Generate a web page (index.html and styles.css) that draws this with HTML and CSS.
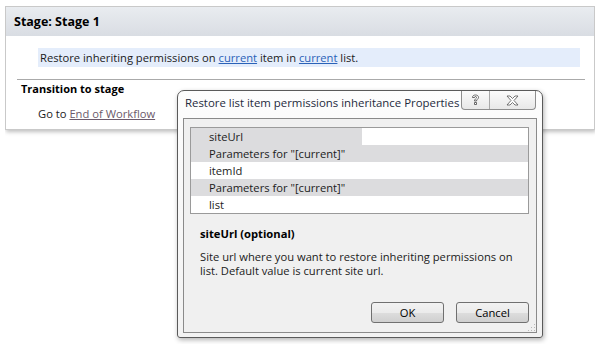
FILE: index.html
```html
<!DOCTYPE html>
<html lang="en">
<head>
    <meta charset="UTF-8">
    <title>Stage 1</title>
    <link rel="stylesheet" href="styles.css">
</head>
<body>
    <div class="stage">
        <div class="stage-head">Stage: Stage 1</div>
        <div class="stage-body">
            <div class="action">Restore inheriting permissions on <a href="#">current</a> item in <a href="#">current</a> list.</div>
        </div>
        <div class="transition">
            <div class="transition-title">Transition to stage</div>
            <div class="goto">Go to <a href="#" class="visited">End of Workflow</a></div>
        </div>
    </div>

    <div class="dialog">
        <div class="dialog-bar">
            <div class="dialog-title">Restore list item permissions inheritance Properties</div>
            <div class="caption-buttons">
                <div class="cap-btn help">
                    <svg width="9" height="12" viewBox="0 0 9 12"><path d="M1.5 3.5 C1.5 1.5 3 1 4.5 1 C6.3 1 7.5 2 7.5 3.4 C7.5 5 5.5 5.2 5.5 7 L3.5 7 C3.5 5 5.5 4.7 5.5 3.5 C5.5 2.8 5 2.5 4.5 2.5 C3.8 2.5 3.5 3 3.5 3.5 Z M3.5 8.5 L5.5 8.5 L5.5 10.5 L3.5 10.5 Z" fill="#fff" stroke="#444" stroke-width="0.8"/></svg>
                </div>
                <div class="cap-btn close">
                    <svg width="13" height="11" viewBox="0 0 13 11"><path d="M1 1 L4 1 L6.5 3.5 L9 1 L12 1 L8 5.5 L12 10 L9 10 L6.5 7.5 L4 10 L1 10 L5 5.5 Z" fill="#fff" stroke="#555" stroke-width="0.8"/></svg>
                </div>
            </div>
        </div>
        <div class="dialog-body">
            <div class="grid">
                <div class="row"><span class="key">siteUrl</span><span class="val"></span></div>
                <div class="row group">Parameters for "[current]"</div>
                <div class="row">itemId</div>
                <div class="row group">Parameters for "[current]"</div>
                <div class="row">list</div>
            </div>
            <div class="help-title">siteUrl (optional)</div>
            <div class="help-text">Site url where you want to restore inheriting permissions on list. Default value is current site url.</div>
            <div class="buttons">
                <button>OK</button>
                <button>Cancel</button>
            </div>
            <div class="grip"></div>
        </div>
    </div>
</body>
</html>
```

FILE: styles.css
```css
html {
    height: 100%;
}

body {
    margin: 6px 6px 0 5px;
    height: calc(100% - 6px);
    background: #fff;
    font-family: "Open Sans", "Noto Sans", sans-serif;
    font-size: 11.2px;
    color: #1b1b1b;
    position: relative;
}

a {
    color: #2a62b8;
}

a.visited {
    color: #6b5a6b;
}

.stage {
    width: 588px;
    height: 122px;
    border: 1px solid #c9c9c9;
    box-shadow: 1px 2px 4px rgba(0, 0, 0, 0.25);
}

.stage-head {
    height: 29px;
    line-height: 29px;
    padding-left: 8px;
    font-size: 12.5px;
    font-weight: bold;
    color: #000;
    background: linear-gradient(#e9ecf0, #d9dde3);
}

.stage-body {
    padding: 12px 5px 0 21px;
    height: 31px;
    border-bottom: 1px solid #aaa;
    margin: 0 9px 0 11px;
}

.action {
    height: 19px;
    line-height: 19px;
    padding-left: 2px;
    background: #e4edfb;
}

.transition {
    padding-left: 15px;
}

.transition-title {
    font-size: 11px;
    font-weight: bold;
    color: #000;
    height: 18px;
    line-height: 18px;
}

.goto {
    padding-left: 17px;
    margin-top: 7px;
    height: 18px;
    line-height: 18px;
}

.dialog {
    position: absolute;
    left: 172px;
    top: 84px;
    width: 364px;
    height: 246px;
    border: 1px solid #5a5a5a;
    border-radius: 7px 7px 3px 3px;
    background: linear-gradient(#fdfdfd, #f2f2f2);
    box-shadow: 1px 2px 5px rgba(0, 0, 0, 0.3);
    display: flex;
    flex-direction: column;
}

.dialog-bar {
    display: flex;
    height: 27px;
}

.dialog-title {
    flex: 1;
    min-width: 0;
    padding: 4px 0 0 7px;
    font-size: 11.4px;
    color: #1e2a3c;
    white-space: nowrap;
}

.caption-buttons {
    display: flex;
    height: 18px;
    margin-right: 6px;
    border: 1px solid #8e8e8e;
    border-top: none;
    border-radius: 0 0 4px 4px;
    background: linear-gradient(#fbfbfb, #e8e8e8);
}

.cap-btn {
    display: flex;
    align-items: center;
    justify-content: center;
}

.help {
    width: 27px;
    border-right: 1px solid #a8a8a8;
}

.close {
    width: 45px;
}

.dialog-body {
    flex: 1;
    margin: 0 5px 4px 5px;
    border: 1px solid #8a8a8a;
    background: #f0f0f0;
    padding: 8px 7px 0 6px;
    position: relative;
}

.grid {
    border: 1px solid #9a9a9a;
    background: #fff;
}

.row {
    height: 17px;
    line-height: 17px;
    padding-left: 18px;
    display: flex;
}

.row .key {
    width: 153px;
    margin-left: -18px;
    padding-left: 18px;
    background: #dcdcde;
}

.row.group {
    background: #dcdcde;
}

.help-title {
    font-weight: bold;
    margin: 12px 0 0 10px;
    height: 16px;
    line-height: 16px;
    color: #000;
}

.help-text {
    margin: 8px 10px 0 10px;
    line-height: 14px;
    color: #1b1b1b;
}

.buttons {
    display: flex;
    justify-content: flex-end;
    gap: 12px;
    margin-top: 24px;
}

button {
    width: 73px;
    height: 21px;
    font-family: inherit;
    font-size: 11.2px;
    color: #000;
    border: 1px solid #707070;
    border-radius: 3px;
    background: linear-gradient(#f2f2f2 0%, #ebebeb 50%, #dddddd 51%, #cfcfcf 100%);
}

.grip {
    position: absolute;
    right: 1px;
    bottom: 1px;
    width: 8px;
    height: 8px;
    background: radial-gradient(circle, #b8b8b8 0.8px, transparent 1px) 0 0 / 3px 3px;
    clip-path: polygon(100% 0, 100% 100%, 0 100%);
}
```
